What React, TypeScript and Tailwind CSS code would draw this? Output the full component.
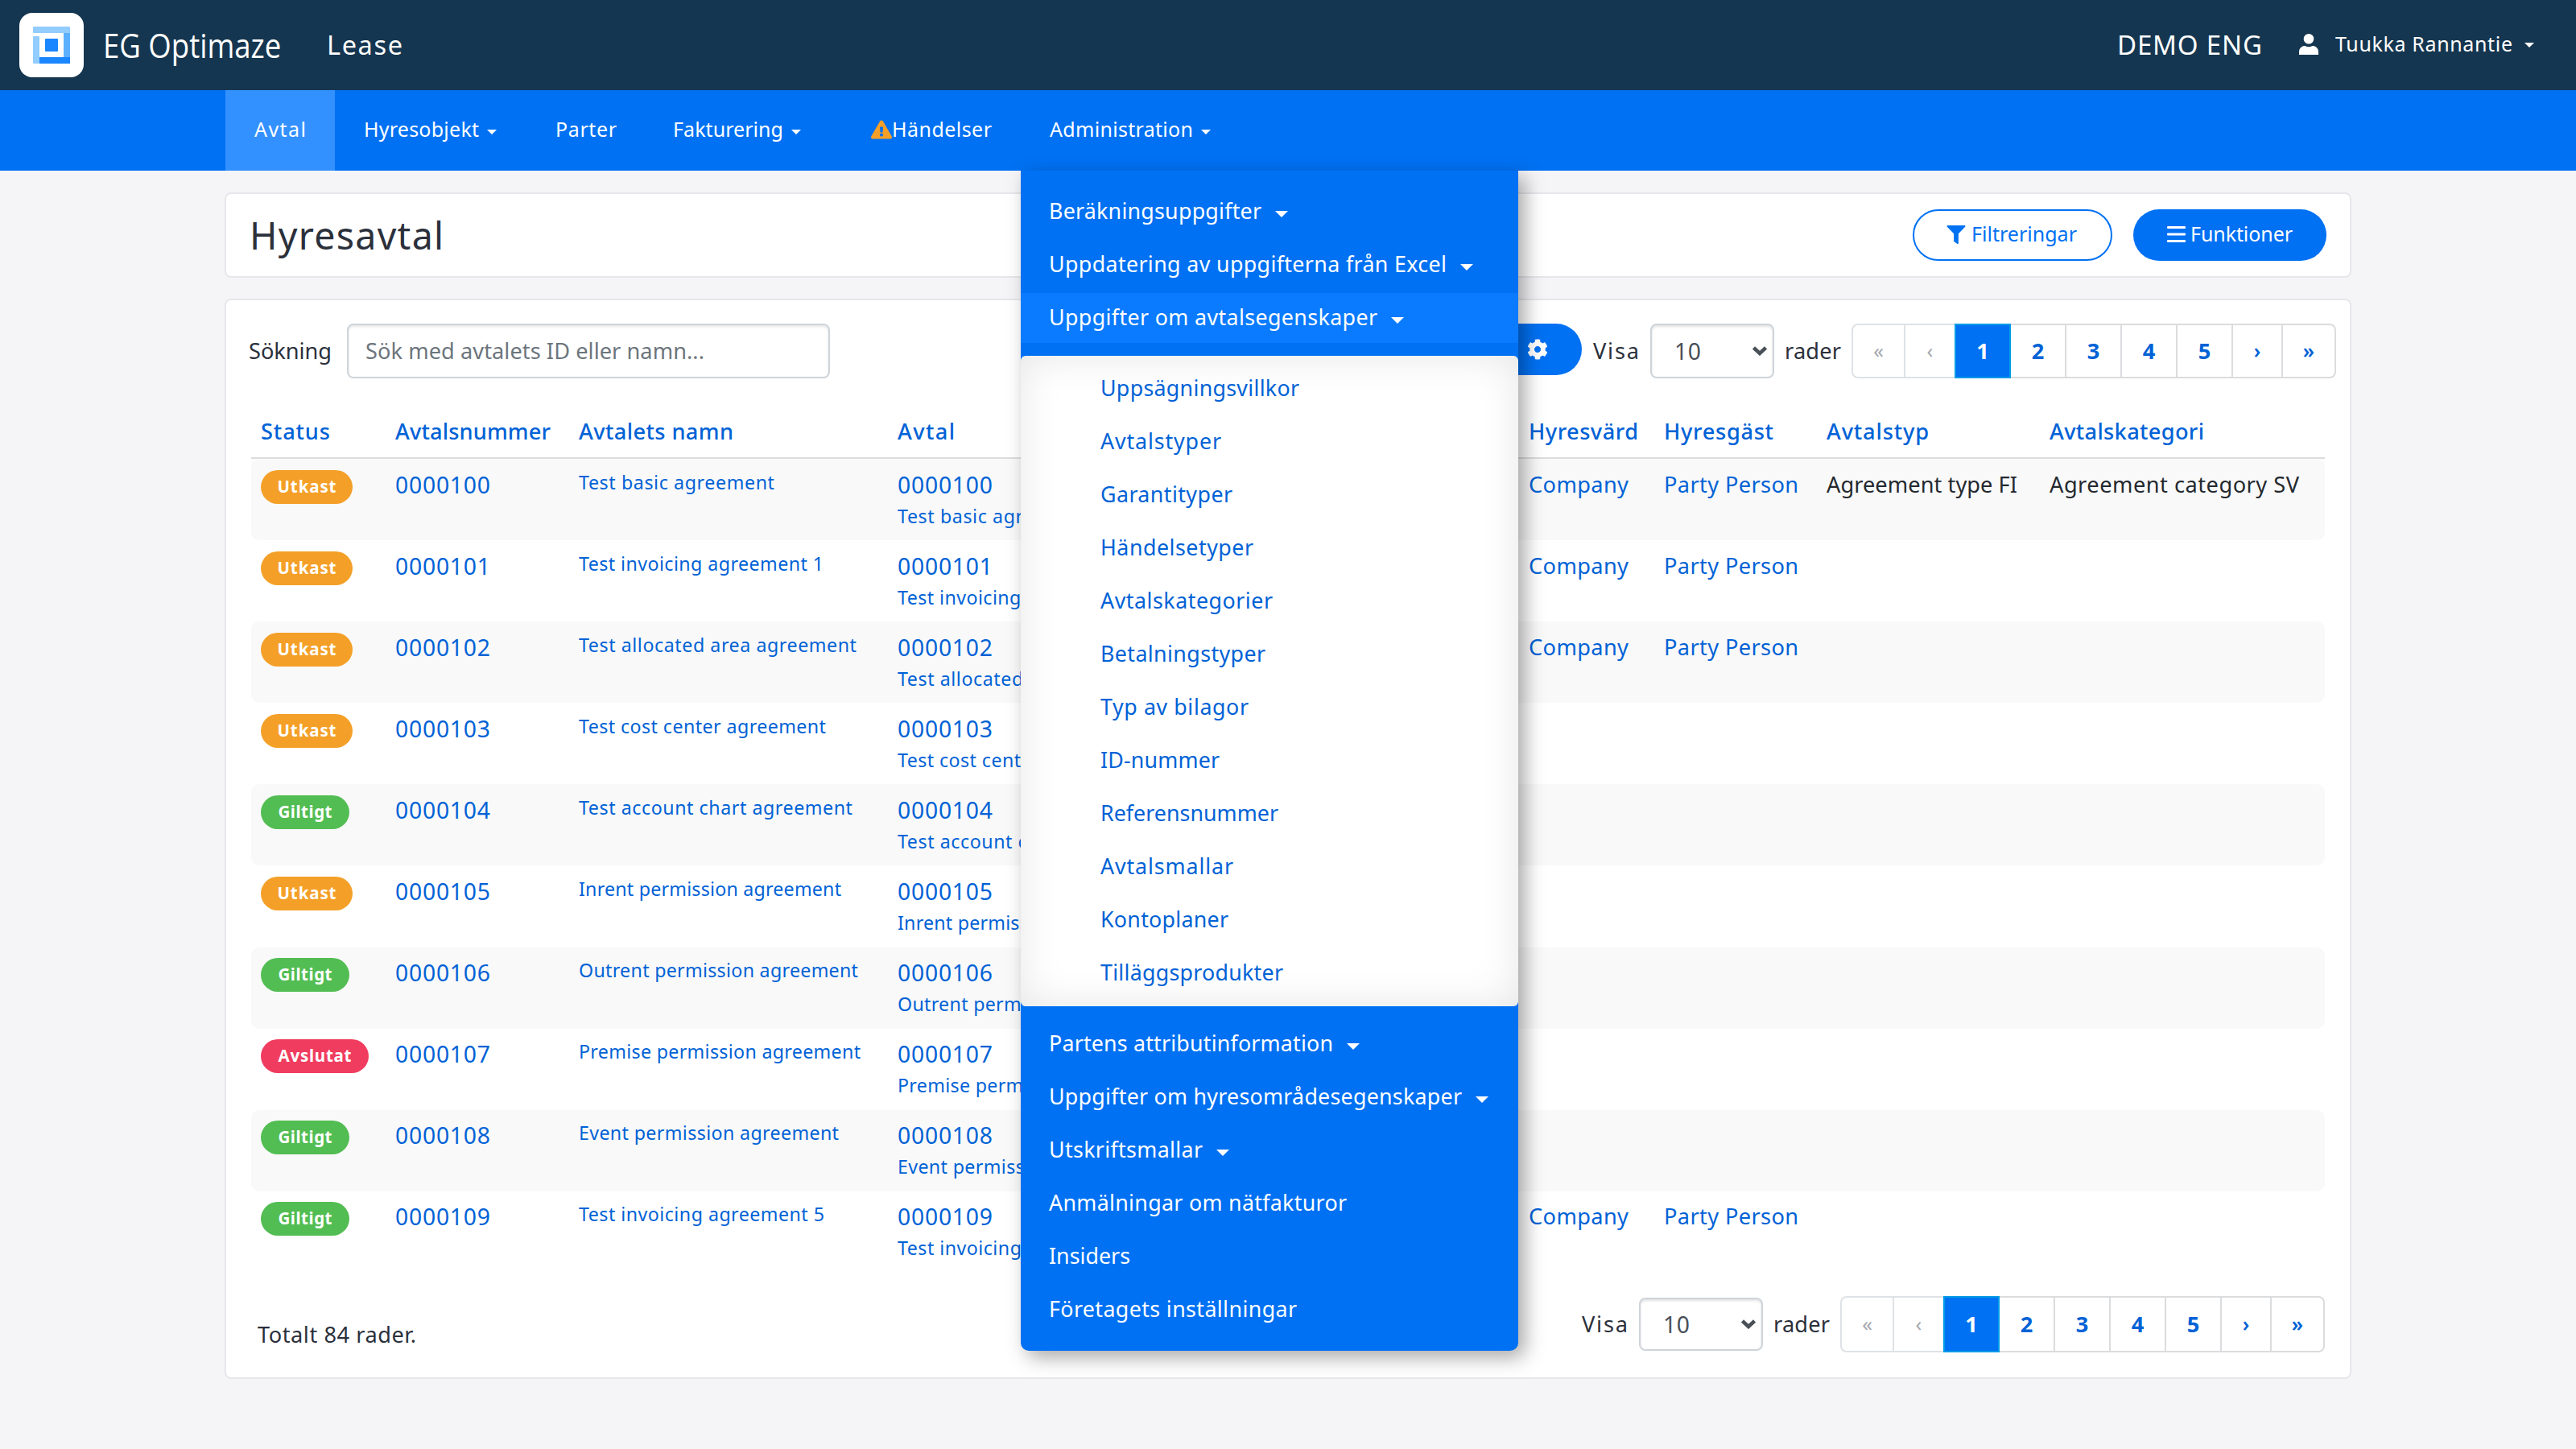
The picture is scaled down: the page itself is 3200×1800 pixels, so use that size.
import { useLayoutEffect, useRef, useState } from "react";
import type { ReactNode } from "react";
import { FaCog, FaExclamationTriangle, FaFilter } from "react-icons/fa";

/** A single line of text tracked so that its glyphs span `w` pixels. */
function T({ w, children, className = "" }: { w: number; children: string; className?: string }) {
  const ref = useRef<HTMLSpanElement>(null);
  const [spacing, setSpacing] = useState(0);
  useLayoutEffect(() => {
    const el = ref.current;
    if (!el) return;
    el.style.letterSpacing = "0px";
    const natural = el.getBoundingClientRect().width;
    const next = (w + 2 - natural) / Math.max(1, children.length - 1);
    el.style.letterSpacing = `${next}px`;
    setSpacing(next);
  }, [w, children]);
  return (
    <span
      ref={ref}
      className={"inline-block whitespace-nowrap " + className}
      style={{ letterSpacing: `${spacing}px`, marginRight: `${-spacing}px` }}
    >
      {children}
    </span>
  );
}

function Caret({ className }: { className: string }) {
  return (
    <svg viewBox="0 0 16 8" className={className} fill="currentColor" preserveAspectRatio="none">
      <path d="M0 0h16L8 8z" />
    </svg>
  );
}

function Logo() {
  return (
    <svg viewBox="0 0 80 80" className="size-20">
      <rect width="80" height="80" rx="16" fill="#fff" />
      <rect x="17" y="17" width="46" height="8" rx="1" fill="#93ccff" />
      <rect x="17" y="29" width="8" height="34" rx="1" fill="#93ccff" />
      <rect x="55" y="25" width="8" height="31" fill="#5bb0ff" />
      <rect x="25" y="55" width="38" height="8" fill="#1a86ff" />
      <rect x="32" y="32" width="16" height="16" rx="1" fill="#1a86ff" />
    </svg>
  );
}

function Header() {
  return (
    <header className="flex h-28 items-center bg-[#153650] pl-6 text-white">
      <Logo />
      <div className="ml-[24px] flex h-full w-[275px] items-center pb-px font-['Open_Sans'] text-[42px] font-medium">
        <span className="inline-block origin-left scale-x-[0.87] whitespace-nowrap">EG Optimaze</span>
      </div>
      <div className="ml-[3px] text-[32.500px]">
        <T w={92}>Lease</T>
      </div>
      <div className="ml-auto w-[226px] text-[33px]">
        <T w={178}>DEMO ENG</T>
      </div>
      <svg viewBox="0 0 24 26" className="mb-0.5 h-[26px] w-6" fill="currentColor">
        <ellipse cx="12" cy="6.3" rx="6.3" ry="6.3" />
        <path d="M0 26v-3.500C0 17.500 3.500 15 7.500 15c1.500.8 3 1.200 4.500 1.200s3-.4 4.500-1.200c4 0 7.500 2.500 7.500 7.500V26z" />
      </svg>
      <div className="ml-[21px] w-[235px] pb-[3px] text-[25px]">
        <T w={218}>Tuukka Rannantie</T>
      </div>
      <Caret className="mr-[52px] h-1.5 w-3" />
    </header>
  );
}

type Entry = { label: string; w: number; caret?: boolean; active?: boolean };

const upperEntries: Entry[] = [
  { label: "Beräkningsuppgifter", w: 262, caret: true },
  { label: "Uppdatering av uppgifterna från Excel", w: 492, caret: true },
  { label: "Uppgifter om avtalsegenskaper", w: 406, caret: true, active: true },
];

const submenu: Entry[] = [
  { label: "Uppsägningsvillkor", w: 245 },
  { label: "Avtalstyper", w: 148 },
  { label: "Garantityper", w: 162 },
  { label: "Händelsetyper", w: 188 },
  { label: "Avtalskategorier", w: 212 },
  { label: "Betalningstyper", w: 203 },
  { label: "Typ av bilagor", w: 182 },
  { label: "ID-nummer", w: 146 },
  { label: "Referensnummer", w: 219 },
  { label: "Avtalsmallar", w: 163 },
  { label: "Kontoplaner", w: 157 },
  { label: "Tilläggsprodukter", w: 225 },
];

const lowerEntries: Entry[] = [
  { label: "Partens attributinformation", w: 351, caret: true },
  { label: "Uppgifter om hyresområdesegenskaper", w: 511, caret: true },
  { label: "Utskriftsmallar", w: 189, caret: true },
  { label: "Anmälningar om nätfakturor", w: 368 },
  { label: "Insiders", w: 99 },
  { label: "Företagets inställningar", w: 306 },
];

function MenuEntry({ entry }: { entry: Entry }) {
  return (
    <li className={"flex h-[62px] items-center gap-[17px] pb-px pl-[35px] " + (entry.active ? "bg-[#0a7bff]" : "")}>
      <T w={entry.w}>{entry.label}</T>
      {entry.caret && <Caret className="mt-1.5 h-2 w-4" />}
    </li>
  );
}

function AdminMenu() {
  return (
    <div className="absolute top-full left-0 z-10 w-[618px] rounded-b-[10px] bg-[#0071f3] py-5 text-[26.800px] text-white shadow-[8px_8px_24px_rgba(0,0,0,0.35)]">
      <ul className="flex flex-col gap-1">
        {upperEntries.map((e) => (
          <MenuEntry key={e.label} entry={e} />
        ))}
      </ul>
      <ul className="my-4 flex flex-col gap-1 rounded-md bg-white py-[10px] text-[#0062d6] shadow-[inset_0_0_50px_rgba(0,0,0,0.1)]">
        {submenu.map((e) => (
          <li key={e.label} className="flex h-[62px] items-center pb-px pl-[99px]">
            <T w={e.w}>{e.label}</T>
          </li>
        ))}
      </ul>
      <ul className="flex flex-col gap-1">
        {lowerEntries.map((e) => (
          <MenuEntry key={e.label} entry={e} />
        ))}
      </ul>
    </div>
  );
}

function NavItem({ width, className = "", children }: { width: string; className?: string; children: ReactNode }) {
  return <li className={"flex items-center pb-[3px] pl-9 " + width + " " + className}>{children}</li>;
}

function Nav() {
  return (
    <nav className="h-[100px] bg-[#0071f3] pl-[280px] text-[25px] text-white">
      <ul className="flex h-full">
        <NavItem width="w-[136px]" className="bg-[#3391ff]">
          <T w={62}>Avtal</T>
        </NavItem>
        <NavItem width="w-[238px]">
          <T w={141}>Hyresobjekt</T>
          <Caret className="mt-1.5 ml-2.5 h-1.5 w-3" />
        </NavItem>
        <NavItem width="w-[146px]">
          <T w={74}>Parter</T>
        </NavItem>
        <NavItem width="w-[232px]">
          <T w={135}>Fakturering</T>
          <Caret className="mt-1.5 ml-2.5 h-1.5 w-3" />
        </NavItem>
        <NavItem width="w-[236px]">
          <FaExclamationTriangle className="ml-[14px] h-6 w-[26px] text-[#f4a028]" />
          <T w={122}>Händelser</T>
        </NavItem>
        <NavItem width="w-[272px]" className="relative">
          <T w={176}>Administration</T>
          <Caret className="mt-1.5 ml-2.5 h-1.5 w-3" />
          <AdminMenu />
        </NavItem>
      </ul>
    </nav>
  );
}

function TitleCard() {
  return (
    <section className="flex h-[106px] items-center rounded-lg border-2 border-[#e6e7ea] bg-white pr-[29px] pl-[29px]">
      <h1 className="pt-0.5 text-[46.500px] text-[#2b303b]">
        <T w={239}>Hyresavtal</T>
      </h1>
      <button className="ml-auto flex h-16 w-[248px] items-center rounded-full border-2 border-[#0071f3] pb-0.5 pl-[39px] text-[25px] text-[#0071f3]">
        <FaFilter className="mr-[6px] h-[23px] w-[26px]" />
        <T w={129}>Filtreringar</T>
      </button>
      <button className="ml-[26px] flex h-16 w-[240px] items-center rounded-full bg-[#0071f3] pb-0.5 pl-[42px] text-[25px] text-white">
        <svg viewBox="0 0 23 20" className="mr-[6px] h-5 w-[23px]" fill="currentColor">
          <rect width="23" height="3" rx="1" />
          <rect y="8.500" width="23" height="3" rx="1" />
          <rect y="17" width="23" height="3" rx="1" />
        </svg>
        <T w={125}>Funktioner</T>
      </button>
    </section>
  );
}

function Pager({ height, selectHeight }: { height: string; selectHeight: string }) {
  const pages = ["2", "3", "4", "5"];
  return (
    <div className="flex items-center">
      <T w={55}>Visa</T>
      <div
        className={
          "ml-[14px] flex w-[154px] items-center justify-between rounded-lg border-2 border-[#ced4da] bg-white pr-[7px] pl-[28px] text-[28.300px] text-[#495057] shadow-[inset_0_2px_3px_rgba(0,0,0,0.12)] " +
          selectHeight
        }
      >
        <T w={31}>10</T>
        <svg viewBox="0 0 18 12" className="h-3 w-[18px]" fill="none" stroke="currentColor" strokeWidth="4.500">
          <path d="M1.500 2 9 9l7.500-7" />
        </svg>
      </div>
      <div className="ml-[13px] w-[83px]">
        <T w={68}>rader</T>
      </div>
      <div className={"flex w-[602px] items-stretch text-center font-bold text-[#0062d6] " + height}>
        <span className="flex w-[67px] items-center justify-center rounded-l-lg border-2 border-[#dee2e6] text-[25px] font-normal text-[#a5a8ad]">«</span>
        <span className="flex w-[61px] items-center justify-center border-y-2 border-[#dee2e6] text-[25px] font-normal text-[#a5a8ad]">‹</span>
        <span className="flex w-[70px] items-center justify-center border-2 border-[#009be6] bg-[#0071f3] text-white">1</span>
        {pages.map((p) => (
          <span key={p} className="flex w-[69px] items-center justify-center border-y-2 border-r-2 border-[#dbdcde]">
            {p}
          </span>
        ))}
        <span className="flex w-[62px] items-center justify-center border-y-2 border-r-2 border-[#dbdcde] text-[25px] font-semibold">›</span>
        <span className="flex w-[66px] items-center justify-center rounded-r-lg border-y-2 border-r-2 border-[#dbdcde] text-[25px] font-semibold">»</span>
      </div>
    </div>
  );
}

type Status = "Utkast" | "Giltigt" | "Avslutat";

const badges: Record<Status, { w: number; className: string }> = {
  Utkast: { w: 71, className: "w-[114px] bg-[#f4a028]" },
  Giltigt: { w: 65, className: "w-[110px] bg-[#52bd52]" },
  Avslutat: { w: 89, className: "w-[134px] bg-[#f03c5f]" },
};

type Row = { status: Status; id: string; name: string; w: number; party?: boolean; typed?: boolean };

const rows: Row[] = [
  { status: "Utkast", id: "0000100", name: "Test basic agreement", w: 241, party: true, typed: true },
  { status: "Utkast", id: "0000101", name: "Test invoicing agreement 1", w: 302, party: true },
  { status: "Utkast", id: "0000102", name: "Test allocated area agreement", w: 343, party: true },
  { status: "Utkast", id: "0000103", name: "Test cost center agreement", w: 305 },
  { status: "Giltigt", id: "0000104", name: "Test account chart agreement", w: 338 },
  { status: "Utkast", id: "0000105", name: "Inrent permission agreement", w: 324 },
  { status: "Giltigt", id: "0000106", name: "Outrent permission agreement", w: 345 },
  { status: "Avslutat", id: "0000107", name: "Premise permission agreement", w: 348 },
  { status: "Giltigt", id: "0000108", name: "Event permission agreement", w: 321 },
  { status: "Giltigt", id: "0000109", name: "Test invoicing agreement 5", w: 303, party: true },
];

const columns = "grid grid-cols-[167px_228px_396px_784px_168px_202px_277px_354px]";

const heads: [string, number][] = [
  ["Status", 84],
  ["Avtalsnummer", 191],
  ["Avtalets namn", 190],
  ["Avtal", 69],
  ["Hyresvärd", 134],
  ["Hyresgäst", 134],
  ["Avtalstyp", 125],
  ["Avtalskategori", 190],
];

function TableRow({ row, striped }: { row: Row; striped: boolean }) {
  const badge = badges[row.status];
  return (
    <div
      className={
        columns + " h-[101.100px] rounded-[10px] pt-[11.500px] leading-10 text-[#0062d6] *:pl-[12px] " + (striped ? "bg-[#f9f9f9]" : "")
      }
    >
      <div>
        <div
          className={
            "mt-[2px] flex h-[42px] items-center justify-center rounded-full pb-[2px] text-[20.500px] font-bold text-white " +
            badge.className
          }
        >
          <T w={badge.w}>{row.status}</T>
        </div>
      </div>
      <div className="text-[28.300px]">
        <T w={116}>{row.id}</T>
      </div>
      <div className="-mt-[3px] text-[23.200px]">
        <T w={row.w}>{row.name}</T>
      </div>
      <div>
        <div className="h-[39px] text-[28.300px]">
          <T w={116}>{row.id}</T>
        </div>
        <div className="h-10 text-[23.200px]">
          <T w={row.w}>{row.name}</T>
        </div>
      </div>
      <div>{row.party && <T w={122}>Company</T>}</div>
      <div>{row.party && <T w={165}>Party Person</T>}</div>
      <div className="text-[#24292f]">{row.typed && <T w={235}>Agreement type FI</T>}</div>
      <div className="text-[#24292f]">{row.typed && <T w={308}>Agreement category SV</T>}</div>
    </div>
  );
}

function AgreementsCard() {
  return (
    <section className="mt-[26px] h-[1342px] rounded-lg border-2 border-[#e6e7ea] bg-white pt-[29px] pl-[31px]">
      <div className="flex w-[2590px] items-center">
        <T w={101} className="-ml-[3px]">Sökning</T>
        <div className="ml-[19px] flex h-[68px] w-[600px] items-center rounded-lg border-2 border-[#ced4da] pl-[21px] text-[#6c757d] shadow-[inset_0_2px_3px_rgba(0,0,0,0.1)]">
          <T w={419}>Sök med avtalets ID eller namn...</T>
        </div>
        <div className="ml-auto mb-1 flex h-16 w-[110px] items-center justify-center rounded-full bg-[#0071f3] text-white">
          <FaCog className="size-[26px]" />
        </div>
        <div className="ml-[14px]">
          <Pager height="h-[68px]" selectHeight="h-[68px]" />
        </div>
      </div>
      <div className="w-[2576px] text-[27.200px]">
        <div className={columns + " h-[100px] items-center border-b-2 border-[#dbdcde] pt-[34px] font-medium text-[#0062d6] *:pl-[12px]"}>
          {heads.map(([label, w]) => (
            <div key={label}>
              <T w={w}>{label}</T>
            </div>
          ))}
        </div>
        {rows.map((row, i) => (
          <TableRow key={row.id} row={row} striped={i % 2 === 0} />
        ))}
      </div>
      <div className="mt-[29px] flex w-[2576px] items-center justify-between">
        <T w={195} className="mt-[27px] ml-2">Totalt 84 rader.</T>
        <Pager height="h-[70px]" selectHeight="h-[66px]" />
      </div>
    </section>
  );
}

export default function App() {
  return (
    <div className="h-[1800px] w-[3200px] overflow-hidden bg-[#f5f5f8] font-['Noto_Sans','Open_Sans',sans-serif] text-[27.200px] leading-normal text-[#2b303b]">
      <Header />
      <Nav />
      <main className="ml-[279px] w-[2642px] pt-[27px]">
        <TitleCard />
        <AgreementsCard />
      </main>
    </div>
  );
}
